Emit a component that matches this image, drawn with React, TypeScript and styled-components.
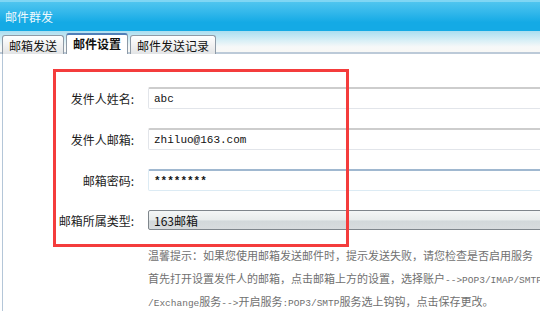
import styled, { createGlobalStyle, css } from "styled-components";

const GlobalStyles = createGlobalStyle`
  html, body {
    margin: 0;
    padding: 0;
    background: #ffffff;
  }

  body {
    font-family: "Noto Sans CJK SC", "Liberation Sans", sans-serif;
    font-size: 12px;
  }
`;

const tabs = ["邮箱发送", "邮件设置", "邮件发送记录"];

function App() {
  return (
    <>
      <GlobalStyles />
      <Window>
        <TitleBar>邮件群发</TitleBar>
        <TabStrip>
          {tabs.map((tab, i) => (
            <Tab key={tab} active={i === 1}>
              {tab}
            </Tab>
          ))}
        </TabStrip>

        <Content>
          <Form>
            <Label>发件人姓名:</Label>
            <TextInput>abc</TextInput>

            <Label>发件人邮箱:</Label>
            <TextInput>zhiluo@163.com</TextInput>

            <Label>邮箱密码:</Label>
            <TextInput focused bold>
              ********
            </TextInput>

            <Label>邮箱所属类型:</Label>
            <Select>163邮箱</Select>
          </Form>

          <Hint>
            <HintLine>
              温馨提示：如果您使用邮箱发送邮件时，提示发送失败，请您检查是否启用服务
            </HintLine>
            <HintLine>
              首先打开设置发件人的邮箱，点击邮箱上方的设置，选择账户
              <Latin>--&gt;POP3/IMAP/SMTP</Latin>
            </HintLine>
            <HintLine>
              <Latin>/Exchange</Latin>服务<Latin>--&gt;</Latin>开启服务
              <Latin>:POP3/SMTP</Latin>服务选上钩钩，点击保存更改。
            </HintLine>
          </Hint>

          <Highlight />
        </Content>
      </Window>
    </>
  );
}

const Window = styled.div`
  width: 540px;
  height: 311px;
  overflow: hidden;
  display: flex;
  flex-direction: column;
`;

const TitleBar = styled.div`
  flex-shrink: 0;
  height: 31px;
  box-sizing: border-box;
  padding: 0 0 1px 5px;
  display: flex;
  align-items: center;
  color: #eef9fd;
  font-size: 12px;
  border-top: 2px solid #7fd6f4;
  background: linear-gradient(#4fc5ef 0%, #2fb6ea 40%, #14aae5 70%, #14aae5 100%);
`;

const TabStrip = styled.div`
  flex-shrink: 0;
  height: 23px;
  box-sizing: border-box;
  padding-left: 2px;
  display: flex;
  align-items: flex-end;
  gap: 2px;
  border-bottom: 2px solid #bccad8;
  background: linear-gradient(#aadef0 0%, #d8eff6 45%, #f6f8f8 75%, #f8f8f6 100%);
`;

const Tab = styled.div<{ active: boolean }>`
  ${(props) => css`
    height: ${props.active ? "21px" : "19px"};
    box-sizing: border-box;
    padding: 0 6px;
    margin-bottom: -2px;
    display: flex;
    align-items: center;
    font-size: 12px;
    color: #111111;
    border: 1px solid #8e9aa6;
    border-bottom: none;
    border-radius: 3px 3px 0 0;
    background: ${props.active
      ? "#ffffff"
      : "linear-gradient(#ffffff 0%, #f2f2f2 50%, #e2e4e6 100%)"};
    font-weight: ${props.active ? 700 : 400};
    border-top: ${props.active ? "2px solid #4f7fb8" : "1px solid #8e9aa6"};
    padding-bottom: ${props.active ? "2px" : "0"};
  `}
`;

const Content = styled.div`
  position: relative;
  flex: 1;
  margin-left: 2px;
  border-left: 1px solid #b4c6d8;
  background: #ffffff;
  padding-top: 33px;
`;

const Form = styled.div`
  display: grid;
  grid-template-columns: 131px 420px;
  column-gap: 14px;
  row-gap: 19px;
  align-items: center;
`;

const Label = styled.div`
  text-align: right;
  font-size: 12px;
  color: #1c1c1c;
  white-space: nowrap;
`;

const TextInput = styled.div<{ focused?: boolean; bold?: boolean }>`
  ${(props) => css`
    height: 22px;
    box-sizing: border-box;
    padding: 0 5px;
    display: flex;
    align-items: center;
    font-family: "Liberation Mono", "DejaVu Sans Mono", monospace;
    font-size: 11px;
    font-weight: ${props.bold ? 700 : 400};
    color: #111111;
    background: #ffffff;
    border: 1px solid ${props.focused ? "#dcebf4" : "#e2e5ea"};
    border-top: 2px solid ${props.focused ? "#a0b8d0" : "#cdcdcd"};
    border-radius: 2px;
  `}
`;

const Select = styled.div`
  height: 20px;
  box-sizing: border-box;
  padding: 0 5px;
  display: flex;
  align-items: center;
  font-size: 12px;
  color: #111111;
  border: 1px solid #7f868c;
  border-radius: 2px;
  background: linear-gradient(#f4f6f6 0%, #e8ecec 50%, #d2d8da 55%, #d8dcde 100%);
`;

const Hint = styled.div`
  margin: 14px 0 0 145px;
  color: #707070;
  font-size: 11px;
  white-space: nowrap;
`;

const HintLine = styled.div`
  height: 23px;
  line-height: 23px;
  overflow: hidden;
`;

const Latin = styled.span`
  font-family: "Liberation Mono", "DejaVu Sans Mono", monospace;
  font-size: 9.5px;
  line-height: 1;
`;

const Highlight = styled.div`
  position: absolute;
  left: 50px;
  top: 15px;
  width: 296px;
  height: 178px;
  box-sizing: border-box;
  border: 3px solid #f43c3c;
  pointer-events: none;
`;

export default App;
